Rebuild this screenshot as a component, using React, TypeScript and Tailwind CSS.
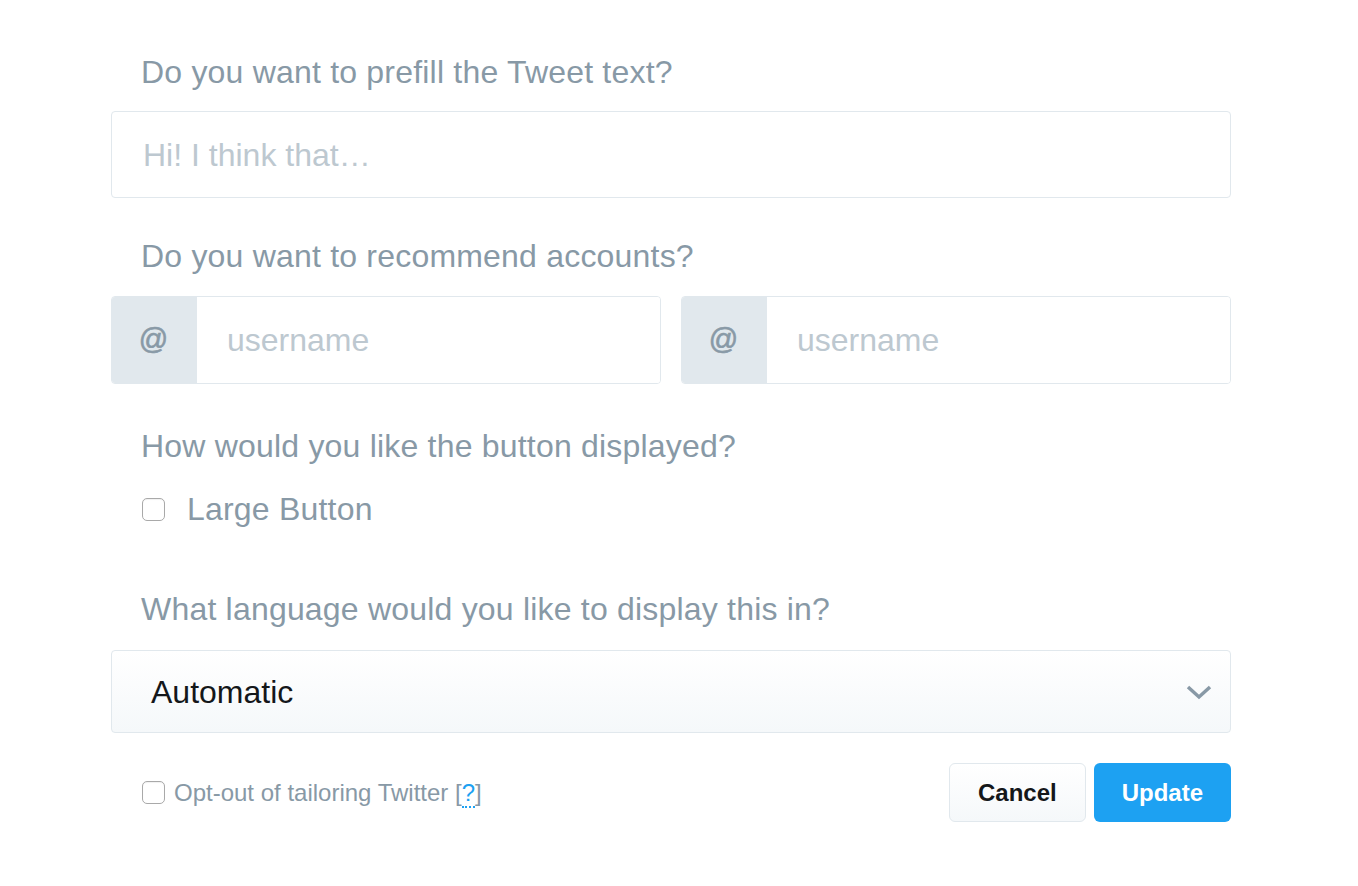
const font = { fontFamily: '"Liberation Sans", Arial, sans-serif' };

function Label({ children }: { children: React.ReactNode }) {
  return <div className="pl-[30px] text-[32px] leading-[40px] tracking-[0.2px] text-[#8899a6]">{children}</div>;
}

function Checkbox() {
  return (
    <span className="block h-[23px] w-[23px] shrink-0 rounded-[5px] border border-[#a9a9a9] bg-white shadow-[inset_0_1px_1px_rgba(0,0,0,0.06)]" />
  );
}

function UsernameField() {
  return (
    <div className="flex h-[88px] overflow-hidden rounded-[4px] border border-[#e1e8ed]">
      <div className="flex w-[85px] items-center justify-center bg-[#e1e8ed] pr-[2px] text-[29px] text-[#8899a6] [-webkit-text-stroke:0.6px_#8899a6]">
        @
      </div>
      <div className="flex flex-1 items-center bg-white pl-[30px] text-[32px] text-[#bdc8d0]">username</div>
    </div>
  );
}

export default function App() {
  return (
    <div className="min-h-[886px] bg-white" style={font}>
      <div className="ml-[111px] w-[1120px] pt-[52px]">
        <Label>Do you want to prefill the Tweet text?</Label>
        <div className="mt-[19px] flex h-[87px] items-center rounded-[4px] border border-[#e1e8ed] bg-white pl-[31px] text-[32px] text-[#bdc8d0]">
          Hi! I think that…
        </div>

        <div className="mt-[38px]">
          <Label>Do you want to recommend accounts?</Label>
        </div>
        <div className="mt-[20px] grid grid-cols-2 gap-[20px]">
          <UsernameField />
          <UsernameField />
        </div>

        <div className="mt-[42px]">
          <Label>How would you like the button displayed?</Label>
        </div>
        <div className="mt-[23px] flex h-[40px] items-center gap-[22px] pl-[31px]">
          <Checkbox />
          <span className="text-[32px] tracking-[0.2px] text-[#8899a6]">Large Button</span>
        </div>

        <div className="mt-[60px]">
          <Label>What language would you like to display this in?</Label>
        </div>
        <div className="mt-[21px] flex h-[83px] items-center justify-between rounded-[4px] border border-[#e1e8ed] bg-gradient-to-b from-white to-[#f5f8fa] pl-[39px] pr-[18px]">
          <span className="text-[32px] text-[#14171a]">Automatic</span>
          <svg width="26" height="16" viewBox="0 0 26 16" fill="none">
            <polyline points="2,3 13,13 24,3" stroke="#8899a6" strokeWidth="3.5" />
          </svg>
        </div>

        <div className="mt-[30px] flex items-center justify-between">
          <div className="flex items-center gap-[9px] pl-[31px]">
            <Checkbox />
            <span className="text-[24px] text-[#8899a6]">
              Opt-out of tailoring Twitter [
              <span className="border-b-2 border-dotted border-[#1da1f2] text-[#1da1f2]">?</span>]
            </span>
          </div>
          <div className="flex gap-[8px]">
            <button className="h-[59px] rounded-[6px] border border-[#e1e8ed] bg-gradient-to-b from-white to-[#f5f8fa] px-[28px] text-[24px] font-bold text-[#14171a]">
              Cancel
            </button>
            <button className="h-[59px] rounded-[6px] bg-[#1da1f2] px-[28px] text-[24px] font-bold text-white">
              Update
            </button>
          </div>
        </div>
      </div>
    </div>
  );
}
